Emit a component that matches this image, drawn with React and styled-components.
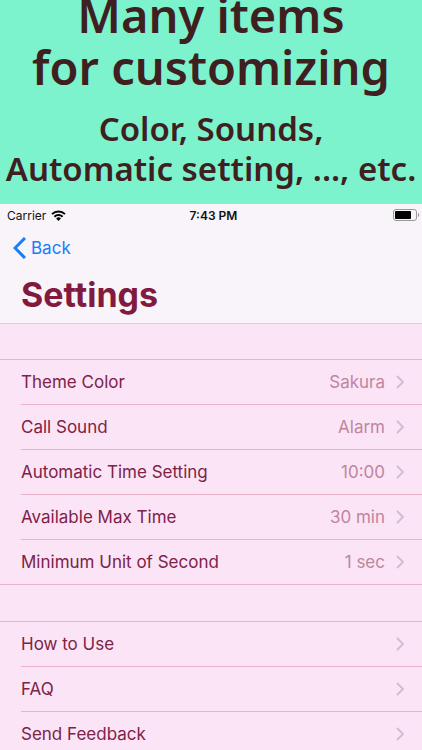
import React from "react";
import styled, { createGlobalStyle } from "styled-components";

const GlobalStyle = createGlobalStyle`
  * {
    box-sizing: border-box;
  }
  body {
    margin: 0;
    background: #fbe4f5;
    font-family: Inter, "Liberation Sans", sans-serif;
  }
`;

const Page = styled.div`
  height: 100vh;
  display: flex;
  flex-direction: column;
  overflow: hidden;
`;

const Promo = styled.header`
  flex: none;
  padding-bottom: 15px;
  overflow: hidden;
  background: #7cf3cc;
  color: #3f1f1f;
  font-family: "Noto Sans", "Open Sans", sans-serif;
  text-align: center;
  white-space: nowrap;
`;

const Headline = styled.h1`
  margin: -11px 0 0;
  font-size: 47px;
  font-weight: 600;
  line-height: 52px;
`;

const Tagline = styled.p`
  margin: 16px 0 0;
  font-size: 33px;
  font-weight: 600;
  line-height: 40px;
`;

const Phone = styled.div`
  flex: 1;
  min-height: 0;
  overflow: hidden;
`;

const TopArea = styled.div`
  background: #f9f4f9;
  border-bottom: 1px solid #dccfd9;
`;

const StatusBar = styled.div`
  display: grid;
  grid-template-columns: 1fr auto 1fr;
  align-items: center;
  height: 22px;
  padding: 0 2px 0 7px;
  color: #111;
  font-size: 12px;
`;

const Carrier = styled.span`
  display: flex;
  align-items: center;
  gap: 5px;
`;

const Clock = styled.time`
  font-weight: 600;
`;

const Battery = styled.svg`
  justify-self: end;
`;

const NavBar = styled.nav`
  display: flex;
  align-items: center;
  height: 43px;
  padding: 0 13px;
`;

const BackLink = styled.a`
  display: flex;
  align-items: center;
  gap: 5px;
  color: #157efb;
  font-size: 17px;
  text-decoration: none;
`;

const Title = styled.h2`
  margin: 0;
  padding: 0 21px;
  height: 54px;
  color: #821a40;
  font-size: 34px;
  font-weight: 700;
  line-height: 52px;
`;

const Group = styled.ul`
  list-style: none;
  margin: 35px 0 0;
  padding: 0;
  border-top: 1px solid #eab4c8;
  border-bottom: 1px solid #eab4c8;

  & + & {
    margin-top: 36px;
  }
`;

const Item = styled.li`
  padding-left: 21px;
`;

const RowButton = styled.button`
  display: flex;
  align-items: center;
  width: 100%;
  height: ${(props) => (props.$last ? "44px" : "45px")};
  padding: 0 18px 0 0;
  border: 0;
  border-bottom: ${(props) => (props.$last ? "0" : "1px solid #eab4c8")};
  background: none;
  color: #7d2248;
  font: inherit;
  font-size: 17px;
  text-align: left;
`;

const Label = styled.span`
  flex: 1;
`;

const Value = styled.span`
  margin-right: 11px;
  color: #c0849f;
`;

const Chevron = () => (
  <svg width="8" height="14" viewBox="0 0 8 14" fill="none" aria-hidden="true">
    <path d="M1 1l6 6-6 6" stroke="#c9bfce" strokeWidth="1.8" />
  </svg>
);

const timerSettings = [
  { label: "Theme Color", value: "Sakura" },
  { label: "Call Sound", value: "Alarm" },
  { label: "Automatic Time Setting", value: "10:00" },
  { label: "Available Max Time", value: "30 min" },
  { label: "Minimum Unit of Second", value: "1 sec" },
];

const helpLinks = [
  { label: "How to Use" },
  { label: "FAQ" },
  { label: "Send Feedback" },
];

const SettingsGroup = ({ items }) => (
  <Group>
    {items.map((item, i) => (
      <Item key={item.label}>
        <RowButton type="button" $last={i === items.length - 1}>
          <Label>{item.label}</Label>
          {item.value && <Value>{item.value}</Value>}
          <Chevron />
        </RowButton>
      </Item>
    ))}
  </Group>
);

const App = () => {
  return (
    <Page>
      <GlobalStyle />
      <Promo>
        <Headline>
          Many items
          <br />
          for customizing
        </Headline>
        <Tagline>
          Color, Sounds,
          <br />
          Automatic setting, ..., etc.
        </Tagline>
      </Promo>
      <Phone>
        <TopArea>
          <StatusBar>
            <Carrier>
              Carrier
              <svg width="15" height="11" viewBox="0 0 15 11" aria-label="Wi-Fi">
                <g fill="none" stroke="#000" strokeWidth="2">
                  <path d="M1 4.1a9.4 9.4 0 0 1 13 0" />
                  <path d="M3.4 6.7a5.9 5.9 0 0 1 8.2 0" />
                </g>
                <path d="M7.5 11L5.1 8.4a3.5 3.5 0 0 1 4.8 0z" />
              </svg>
            </Carrier>
            <Clock>7:43 PM</Clock>
            <Battery width="27" height="12" viewBox="0 0 27 12" aria-label="Battery">
              <rect x="0.5" y="0.5" width="23" height="11" rx="2.5" fill="none" stroke="#999" />
              <rect x="2" y="2" width="16" height="8" rx="1" />
              <path d="M25 4a2.2 2.2 0 0 1 0 4z" fill="#999" />
            </Battery>
          </StatusBar>
          <NavBar>
            <BackLink href="#back">
              <svg width="13" height="22" viewBox="0 0 13 22" fill="none" aria-hidden="true">
                <path d="M12 1L2 11l10 10" stroke="#157efb" strokeWidth="3" />
              </svg>
              Back
            </BackLink>
          </NavBar>
          <Title>Settings</Title>
        </TopArea>
        <SettingsGroup items={timerSettings} />
        <SettingsGroup items={helpLinks} />
      </Phone>
    </Page>
  );
};

export default App;
